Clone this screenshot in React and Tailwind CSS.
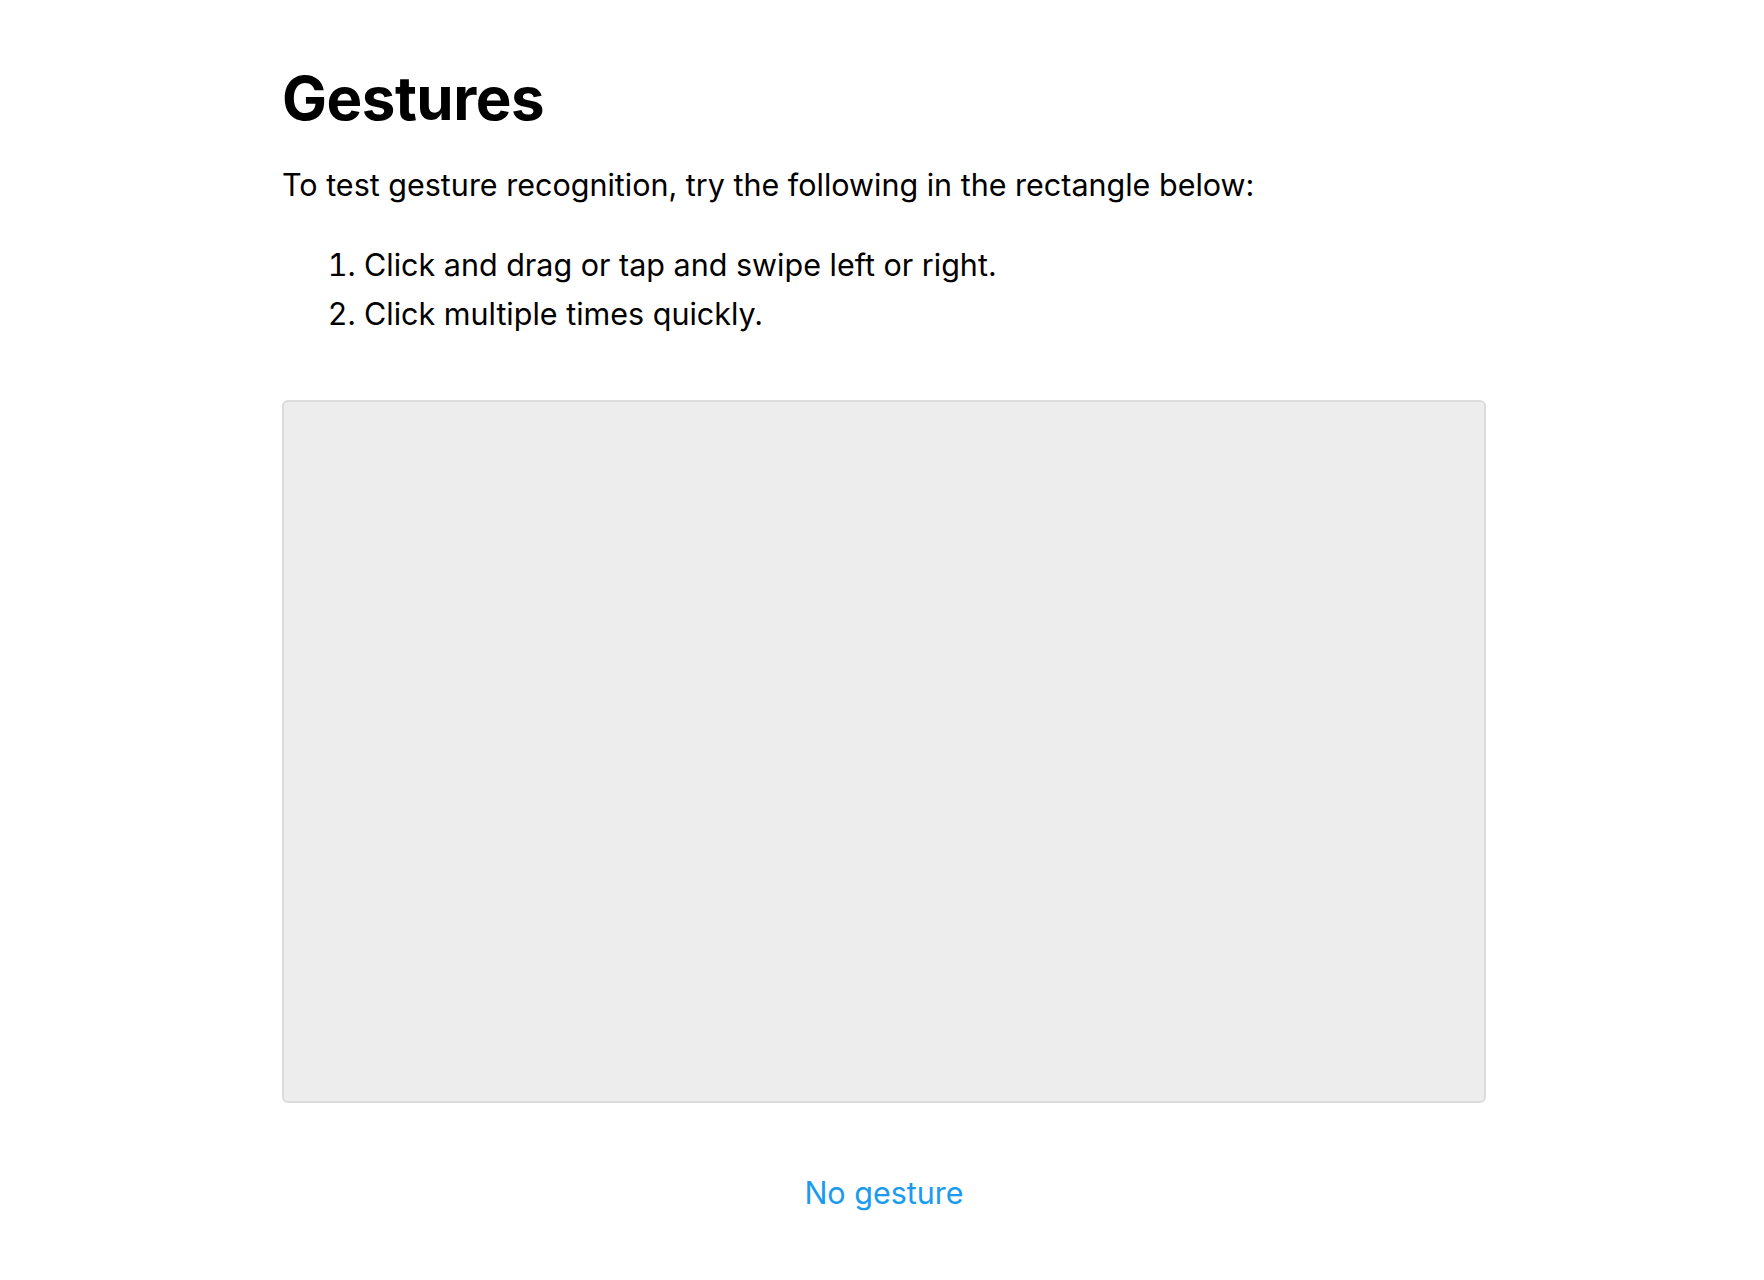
import React, { useState } from 'react';

const App = () => {
  const [gesture] = useState('No gesture');

  return (
    <div className="min-h-screen bg-white text-black" style={{ fontFamily: 'Inter, "Noto Sans", sans-serif' }}>
      <div className="ml-[282px] w-[1204px] pt-[62px]">
        <h1 className="text-[60px] font-bold leading-[72px] tracking-[-0.5px]">Gestures</h1>
        <p className="mt-[28px] text-[30.5px] leading-[46px]">
          To test gesture recognition, try the following in the rectangle below:
        </p>
        <ol className="mt-[32px] list-decimal pl-[82px] text-[30.5px] leading-[49px]">
          <li>Click and drag or tap and swipe left or right.</li>
          <li>Click multiple times quickly.</li>
        </ol>

        {/* gesture area */}
        <div className="mt-[62px] h-[703px] rounded-[6px] border-2 border-[#dcdcdc] bg-[#ededed]"></div>

        <div className="mt-[67px] text-center text-[30.5px] leading-[46px] text-[#1a9bf0]">{gesture}</div>
      </div>
    </div>
  );
};

export default App;
